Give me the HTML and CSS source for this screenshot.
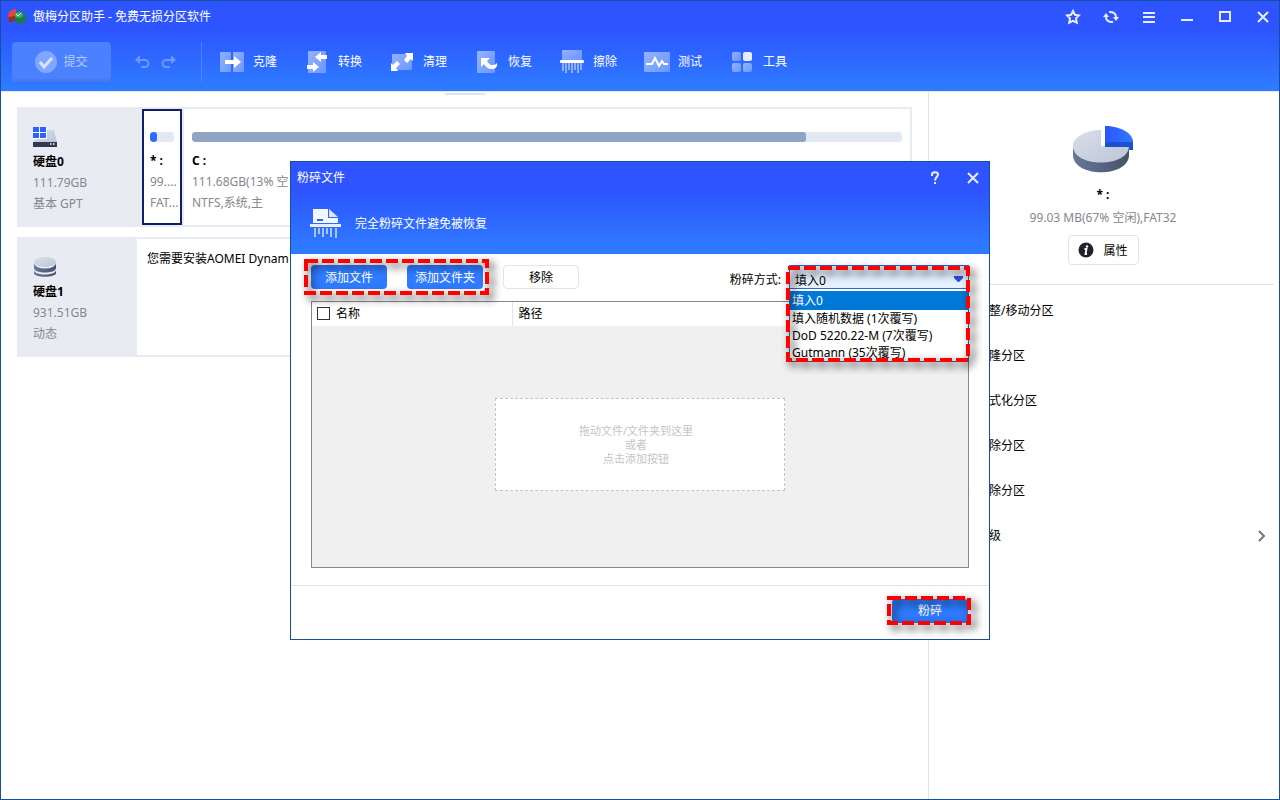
FILE: index.html
```
<!DOCTYPE html>
<html lang="zh-CN">
<head>
  <meta charset="utf-8">
  <title>傲梅分区助手 - 免费无损分区软件</title>
  <link rel="stylesheet" href="styles.css">
</head>
<body>
<svg width="0" height="0" class="defs" aria-hidden="true">
  <defs>
    <linearGradient id="soft" x1="0" y1="0" x2="1" y2="1">
      <stop offset="0" stop-color="#fff" stop-opacity=".5"/>
      <stop offset="1" stop-color="#fff" stop-opacity=".28"/>
    </linearGradient>
    <linearGradient id="steel" x1="0" y1="0" x2="1" y2="0">
      <stop offset="0" stop-color="#68789a"/>
      <stop offset="1" stop-color="#47516b"/>
    </linearGradient>
    <linearGradient id="silver" x1="0" y1="0" x2="1" y2="1">
      <stop offset="0" stop-color="#d8deea"/>
      <stop offset="1" stop-color="#bdc5d6"/>
    </linearGradient>
    <linearGradient id="blue" x1="0" y1="0" x2="1" y2="0">
      <stop offset="0" stop-color="#2d54ff"/>
      <stop offset="1" stop-color="#2e7bff"/>
    </linearGradient>
  </defs>
</svg>

<div class="window">
  <header class="top">
    <div class="titlebar">
      <svg class="logo" width="18" height="16" viewBox="0 0 18 16">
        <path d="M0 7C0 3 4 0 8 0v6L4 8v4L0 11z" fill="#e8443c"/>
        <path d="M0 8l7-1v5l-6 1z" fill="#8e3322"/>
        <path d="M9 0c4 0 8 2 8 6l-4 2-5-3z" fill="#2b63b8"/>
        <path d="M7 8l11-2v5c-1 3-4 4-8 4L7 12z" fill="#1c7a4c"/>
        <ellipse cx="11" cy="6" rx="4" ry="3" fill="#30b266"/>
        <path d="M8 5l2 2 3-3" fill="none" stroke="#d6ffe2" stroke-width="1"/>
      </svg>
      <h1>傲梅分区助手 - 免费无损分区软件</h1>
      <div class="window-buttons">
        <button aria-label="收藏"><svg width="16" height="16" viewBox="0 0 16 16"><path d="M8 2l1.900 3.800 4.100.6-3 3 .8 4.300L8 11.800l-3.800 1.900.8-4.300-3-3 4.100-.6z" class="line"/></svg></button>
        <button aria-label="刷新"><svg width="16" height="16" viewBox="0 0 16 16"><path d="M6 3.200A5.500 5.500 0 0 1 13.200 8M10 12.800A5.500 5.500 0 0 1 2.800 8" class="line"/><path d="M10 8h6l-3 4zM0 8h6L3 4z" fill="#e8eeff"/></svg></button>
        <button aria-label="菜单"><svg width="16" height="16" viewBox="0 0 16 16"><path d="M2 4h12M2 8h12M2 13h12" class="line"/></svg></button>
        <button aria-label="最小化"><svg width="16" height="16" viewBox="0 0 16 16"><path d="M2 11h12" class="line"/></svg></button>
        <button aria-label="最大化"><svg width="16" height="16" viewBox="0 0 16 16"><rect x="3" y="3" width="10" height="9" class="line"/></svg></button>
        <button aria-label="关闭"><svg width="16" height="16" viewBox="0 0 16 16"><path d="M3 3l10 10M13 3L3 13" class="line"/></svg></button>
      </div>
    </div>
    <nav class="toolbar">
      <button class="commit" disabled>
        <svg width="22" height="22" viewBox="0 0 22 22"><circle cx="11" cy="11" r="11" fill="#fff" opacity=".3"/><path d="M5 11l4 5 8-9" fill="none" stroke="#d9e3ff" stroke-width="3"/></svg>
        提交
      </button>
      <button class="history" disabled aria-label="撤销"><svg width="15" height="14" viewBox="0 0 15 14"><path d="M4 5h6a3.500 3.500 0 0 1 0 7H6" fill="none" stroke="#6f97ff" stroke-width="2"/><path d="M0 5l5-5v9z" fill="#6f97ff"/></svg></button>
      <button class="history" disabled aria-label="重做"><svg width="15" height="14" viewBox="0 0 15 14"><path d="M11 5H5a3.500 3.500 0 0 0 0 7h4" fill="none" stroke="#6f97ff" stroke-width="2"/><path d="M15 5l-5-5v9z" fill="#6f97ff"/></svg></button>
      <div class="tools">
        <button class="tool"><svg width="26" height="24" viewBox="0 0 26 24"><rect x="1" y="2" width="11" height="20" rx="1" fill="url(#soft)"/><rect x="14" y="2" width="11" height="20" rx="1" fill="url(#soft)"/><path d="M6 10h9V6l7 6-7 6v-4H6z" fill="#fff"/></svg>克隆</button>
        <button class="tool"><svg width="26" height="24" viewBox="0 0 26 24"><rect x="4" y="1" width="18" height="22" rx="1" fill="url(#soft)"/><path d="M23 5h-6V2l-6 5 6 5V9h6zM3 15h6v-3l6 5-6 5v-3H3z" fill="#fff"/></svg>转换</button>
        <button class="tool"><svg width="26" height="24" viewBox="0 0 26 24"><rect x="3" y="4" width="20" height="16" rx="1" fill="url(#soft)"/><path d="M16 3h8v8l-2-2-4 4-3-3 3-4zM2 13l2 2 4-4 3 3-4 4 2 3H2z" fill="#fff"/></svg>清理</button>
        <button class="tool"><svg width="26" height="24" viewBox="0 0 26 24"><rect x="3" y="1" width="18" height="22" rx="1" fill="url(#soft)"/><path d="M7 8h9l-3 3c2 3 4 5 6 4 2 0 3-1 4-2 1 4-2 6-5 6-4 0-6-2-8-5l-3 3z" fill="#fff"/></svg>恢复</button>
        <button class="tool"><svg width="26" height="24" viewBox="0 0 26 24"><rect x="3" y="0" width="20" height="11" rx="1" fill="url(#soft)"/><path d="M4 13v8M7 13v10M10 13v7M13 13v10M16 13v7M19 13v10M22 13v7" stroke="#fff" stroke-opacity=".45" stroke-width="2"/><rect x="1" y="10" width="24" height="3" rx="1" fill="#fff"/></svg>擦除</button>
        <button class="tool"><svg width="26" height="24" viewBox="0 0 26 24"><rect x="0" y="2" width="26" height="20" rx="1" fill="url(#soft)"/><path d="M2 14h6l3-6 4 8 3-5 2 3h4" fill="none" stroke="#fff" stroke-width="2"/></svg>测试</button>
        <button class="tool"><svg width="26" height="24" viewBox="0 0 26 24"><rect x="3" y="2" width="9" height="9" rx="2" fill="url(#soft)"/><rect x="14" y="2" width="9" height="9" rx="2" fill="#e6edff"/><rect x="3" y="13" width="9" height="9" rx="2" fill="url(#soft)"/><rect x="14" y="13" width="9" height="9" rx="2" fill="url(#soft)"/></svg>工具</button>
      </div>
    </nav>
  </header>

  <main class="content">
    <section class="disks">
      <div class="handle"></div>
      <div class="disk">
        <div class="disk-head disk-head-wide">
          <svg width="24" height="20" viewBox="0 0 24 20"><path d="M14 3h7l3 12H0z" fill="url(#silver)"/><rect y="15" width="24" height="5" fill="#30394f"/><path d="M17 17h1.500M20 17h1.500" stroke="#fff" stroke-width="1.500"/><path d="M0 0h14v12H0z" fill="#fff"/><path d="M0 0h6v5H0zM7 0h6v5H7zM0 6h6v5H0zM7 6h6v5H7z" fill="#2e62ff"/></svg>
          <b>硬盘0</b>
          <span>111.79GB</span>
          <span>基本 GPT</span>
        </div>
        <div class="partition selected">
          <div class="usage"><div class="used" style="width: 28%"></div></div>
          <b>* :</b>
          <span>99....</span>
          <span>FAT...</span>
        </div>
        <div class="partition system">
          <div class="usage"><div class="used" style="width: 86.5%"></div></div>
          <b>C :</b>
          <span>111.68GB(13% 空</span>
          <span>NTFS,系统,主</span>
        </div>
      </div>
      <div class="disk">
        <div class="disk-head">
          <svg width="24" height="20" viewBox="0 0 24 20"><path d="M1 13v3c0 5 22 5 22 0v-3z" fill="url(#steel)"/><path d="M1 11c0 6 22 6 22 0v2c0 6-22 6-22 0z" fill="#e9ecf4"/><path d="M1 6v5c0 5 22 5 22 0V6z" fill="url(#steel)"/><ellipse cx="12" cy="6" rx="11" ry="5.500" fill="#e9ecf4"/><ellipse cx="12" cy="5" rx="11" ry="5" fill="url(#silver)"/></svg>
          <b>硬盘1</b>
          <span>931.51GB</span>
          <span>动态</span>
        </div>
        <p class="notice">您需要安装AOMEI Dynam</p>
      </div>
    </section>

    <aside class="side">
      <div class="summary">
        <svg width="62" height="48" viewBox="0 0 62 48"><path d="M1 21v9c0 23 56 23 56 0v-9z" fill="url(#steel)"/><path d="M29 5v16h28c0 22-56 22-56 0C1 12 14 5 29 5z" fill="url(#silver)"/><path d="M33 17h28v8h-4v-3H33z" fill="#1b52cc"/><path d="M33 1c15 0 28 7 28 16H33z" fill="url(#blue)"/></svg>
        <b>* :</b>
        <span>99.03 MB(67% 空闲),FAT32</span>
        <button class="props"><svg width="16" height="16" viewBox="0 0 16 16"><circle cx="8" cy="8" r="7.500" fill="#202329"/><circle cx="9" cy="4.500" r="1.200" fill="#fff"/><path d="M6.500 7h2l-1 5h1.500" fill="none" stroke="#fff" stroke-width="1.800"/></svg>属性</button>
      </div>
      <ul class="actions">
        <li><a href="#">调整/移动分区</a></li>
        <li><a href="#">克隆分区</a></li>
        <li><a href="#">格式化分区</a></li>
        <li><a href="#">删除分区</a></li>
        <li><a href="#">擦除分区</a></li>
        <li><a href="#">高级<svg width="8" height="12" viewBox="0 0 8 12"><path d="M1 1l5 5-5 5" fill="none" stroke="#777" stroke-width="2"/></svg></a></li>
      </ul>
    </aside>
  </main>
</div>

<div class="overlay">
  <div class="dialog" role="dialog" aria-label="粉碎文件">
    <header class="dialog-top">
      <div class="dialog-title">
        <h2>粉碎文件</h2>
        <div class="window-buttons">
          <button aria-label="帮助"><svg width="16" height="16" viewBox="0 0 16 16"><path d="M5 6V4.500C5 1.500 11 1.500 11 4.500 11 7 8 7 8 10.500M8 12v2" class="line"/></svg></button>
          <button aria-label="关闭"><svg width="16" height="16" viewBox="0 0 16 16"><path d="M3 3l10 10M13 3L3 13" class="line"/></svg></button>
        </div>
      </div>
      <div class="dialog-intro">
        <svg width="32" height="30" viewBox="0 0 32 30"><path d="M3 0h15v9h10v5H3z" fill="#f2f6ff"/><path d="M19 0l9 8h-9z" fill="#dbe6ff"/><path d="M7 10h6v2H7z" fill="#2e62ff"/><rect y="15" width="31" height="3" fill="#e6edff"/><path d="M5 19v9M9 19v6M13 19v9M17 19v6M21 19v9M26 19v10" stroke="#a9c4ff" stroke-width="2"/></svg>
        <p>完全粉碎文件避免被恢复</p>
      </div>
    </header>

    <div class="dialog-body">
      <div class="controls">
        <div class="add-buttons">
          <button class="btn primary">添加文件</button>
          <button class="btn primary">添加文件夹</button>
          <svg class="marker"><rect width="100%" height="100%"/></svg>
        </div>
        <button class="btn">移除</button>
        <label for="method">粉碎方式:</label>
        <div class="method">
          <select id="method">
            <option>填入0</option>
            <option>填入随机数据 (1次覆写)</option>
            <option>DoD 5220.22-M (7次覆写)</option>
            <option>Gutmann (35次覆写)</option>
          </select>
          <svg class="arrow" width="9" height="6" viewBox="0 0 9 6"><path d="M0 0h9v2L5 6H4L0 2z" fill="#2b50e8"/></svg>
          <ul class="method-list" role="listbox" aria-label="粉碎方式">
            <li role="option" aria-selected="true">填入0</li>
            <li role="option">填入随机数据 (1次覆写)</li>
            <li role="option">DoD 5220.22-M (7次覆写)</li>
            <li role="option">Gutmann (35次覆写)</li>
          </ul>
          <svg class="marker"><rect width="100%" height="100%"/></svg>
        </div>
      </div>

      <div class="files">
        <table>
          <thead>
            <tr>
              <th class="col-name"><label><input type="checkbox">名称</label></th>
              <th>路径</th>
            </tr>
          </thead>
        </table>
        <div class="drop-area">
          <p class="dropzone">拖动文件/文件夹到这里<br>或者<br>点击添加按钮</p>
        </div>
      </div>
    </div>

    <footer class="dialog-footer">
      <div class="shred">
        <button class="btn primary">粉碎</button>
        <svg class="marker"><rect width="100%" height="100%"/></svg>
      </div>
    </footer>
  </div>
</div>
</body>
</html>
```
FILE: styles.css
```
* {
  box-sizing: border-box;
}

body {
  margin: 0;
  font-family: "Noto Sans", "Noto Sans CJK SC", sans-serif;
  font-size: 12px;
  line-height: 21px;
  color: #000;
}

h1, h2, p, ul {
  margin: 0;
  padding: 0;
  font-size: 12px;
  font-weight: normal;
}

ul {
  list-style: none;
}

a {
  color: inherit;
  text-decoration: none;
}

button, select {
  font: inherit;
  color: inherit;
  margin: 0;
  padding: 0;
  border: none;
  background: none;
}

svg {
  display: block;
  flex-shrink: 0;
}

.defs {
  position: absolute;
}

.line {
  fill: none;
  stroke: #e8eeff;
  stroke-width: 2;
}

.window {
  display: flex;
  flex-direction: column;
  min-height: 100vh;
  border: 1px solid #1450a0;
  background-color: #fff;
}

.top, .dialog-top {
  background: linear-gradient(#2d54ff 30%, #2e7bff 96%);
  color: #fff;
}

.titlebar {
  display: flex;
  align-items: center;
  height: 31px;
  padding: 0 1px 0 7px;
}

.titlebar h1 {
  margin-left: 7px;
}

.window-buttons {
  display: flex;
  gap: 8px;
  margin-left: auto;
}

.window-buttons button {
  display: flex;
  justify-content: center;
  align-items: center;
  width: 30px;
  height: 30px;
}

.toolbar {
  display: flex;
  align-items: center;
  height: 59px;
  padding: 0 11px;
}

.commit {
  display: flex;
  justify-content: center;
  align-items: center;
  gap: 6px;
  width: 99px;
  height: 40px;
  margin-right: 18px;
  border-radius: 4px;
  background-color: #4b80ff;
  box-shadow: inset 0 -3px #4779f5;
  color: #b4c9ff;
}

.history {
  display: flex;
  justify-content: center;
  width: 26px;
}

.tools {
  display: flex;
  margin-left: 20px;
  padding-left: 17px;
  border-left: 1px solid #4d82ff;
}

.tool {
  display: flex;
  align-items: center;
  gap: 8px;
  width: 85px;
  height: 40px;
}

.content {
  display: flex;
  flex: 1;
  border-top: 1px solid #e3e9f5;
}

.disks {
  flex: 1;
  padding: 1px 16px;
}

.handle {
  width: 40px;
  height: 2px;
  margin: 0 auto 12px;
  background-color: #dde3f0;
}

.disk {
  display: flex;
  min-height: 120px;
  margin-bottom: 10px;
  border: 2px solid #e8ebf2;
}

.disk-head {
  display: flex;
  flex-direction: column;
  width: 118px;
  padding: 18px 14px 0;
  background-color: #e8ebf2;
}

.disk-head-wide {
  width: 123px;
}

.disk-head svg {
  margin-bottom: 4px;
}

.disk-head span, .partition span, .summary span {
  color: #85888e;
}

.partition {
  display: flex;
  flex-direction: column;
  padding: 23px 8px 0;
  white-space: nowrap;
}

.partition.selected {
  width: 40px;
  padding: 21px 6px 0;
  border: 2px solid #101f65;
}

.partition.system {
  flex: 1;
  border-left: 2px solid #e8ebf2;
}

.usage {
  height: 10px;
  margin-bottom: 8px;
  border-radius: 3px;
  background-color: #e2e9f5;
  overflow: hidden;
}

.used {
  height: 10px;
  border-radius: 3px;
  background-color: #90a4c4;
}

.selected .used {
  background-color: #2e6aff;
}

.notice {
  padding: 9px 10px;
}

.side {
  width: 351px;
  padding-right: 5px;
  border-left: 1px solid #dde3f0;
}

.summary {
  display: flex;
  flex-direction: column;
  align-items: center;
  padding: 33px 0 19px 3px;
  border-bottom: 1px solid #dde3f0;
  line-height: 23px;
}

.summary svg {
  margin-bottom: 10px;
}

.props {
  display: flex;
  justify-content: center;
  align-items: center;
  gap: 9px;
  width: 71px;
  height: 30px;
  margin-top: 6px;
  border: 1px solid #dde3f0;
  border-radius: 4px;
}

.props svg {
  margin: 0;
}

.actions {
  padding: 3px 8px 0 48px;
}

.actions a {
  display: flex;
  justify-content: space-between;
  align-items: center;
  height: 45px;
}

.overlay {
  position: fixed;
  inset: 0;
  display: flex;
  justify-content: center;
  align-items: center;
}

.dialog {
  width: 700px;
  max-width: 100%;
  border: 1px solid #1450a0;
  background-color: #fff;
}

.dialog-title {
  display: flex;
  align-items: center;
  height: 32px;
  padding: 0 1px 0 6px;
}

.dialog-intro {
  display: flex;
  align-items: center;
  gap: 13px;
  height: 60px;
  padding: 0 19px;
}

.dialog-body {
  padding: 11px 20px 17px;
}

.controls {
  display: flex;
  align-items: center;
  margin-bottom: 11px;
}

.add-buttons {
  display: flex;
  gap: 20px;
  margin-right: 20px;
  position: relative;
}

.btn {
  width: 76px;
  height: 24px;
  border: 1px solid #dde3f0;
  border-radius: 4px;
}

.btn.primary {
  border: none;
  background-color: #2e7bff;
  color: #fff;
}

.controls > label {
  margin-left: auto;
  margin-right: 8px;
  padding-top: 4px;
}

.method {
  position: relative;
  width: 180px;
}

.method select {
  appearance: none;
  display: block;
  width: 100%;
  height: 24px;
  padding: 4px 5px 0;
  border: 1px solid #2e62e0;
  border-radius: 0;
  background-color: #e5f1ff;
}

.arrow {
  position: absolute;
  top: 11px;
  right: 6px;
}

.method-list {
  position: absolute;
  top: 100%;
  left: 0;
  right: 0;
  z-index: 1;
  margin-top: 2px;
  padding: 0 2px;
  border: solid #0078d7;
  border-width: 0 1px 1px;
  background-color: #fff;
  line-height: 17px;
  white-space: nowrap;
}

.method-list li[aria-selected] {
  margin: 0 -2px;
  padding: 1px 2px;
  background-color: #0078d7;
  color: #fff;
}

/* red dashed frames */
.marker {
  position: absolute;
  z-index: 2;
  top: -4px;
  left: -5px;
  width: calc(100% + 9px);
  height: calc(100% + 8px);
  overflow: visible;
  pointer-events: none;
  filter: drop-shadow(4px 4px 4px rgba(0, 0, 0, 0.8));
}

.marker rect {
  fill: none;
  stroke: #f00;
  stroke-width: 4;
  stroke-dasharray: 12 4;
}

.method .marker {
  top: 3px;
  left: -1px;
  width: 100%;
  height: 92px;
}

.shred .marker {
  top: -1px;
  left: -3px;
  width: calc(100% + 4px);
  height: calc(100% + 1px);
}

.files {
  display: flex;
  flex-direction: column;
  min-height: 267px;
  border: 1px solid #828790;
  background-color: #f0f0f0;
}

.files table {
  width: 100%;
  border-collapse: collapse;
  table-layout: fixed;
  background-color: #fff;
}

.files th {
  height: 24px;
  padding: 0 6px;
  font-weight: normal;
  text-align: left;
}

.files .col-name {
  width: 200px;
  padding: 0 5px;
  border-right: 1px solid #e5e5e5;
}

.files th label {
  display: flex;
  align-items: center;
  gap: 6px;
}

.files input {
  appearance: none;
  width: 13px;
  height: 13px;
  margin: 0;
  border: 1px solid #333;
  background-color: #fff;
}

.drop-area {
  display: flex;
  justify-content: center;
  align-items: center;
  flex: 1;
  padding-bottom: 4px;
}

.dropzone {
  width: 290px;
  padding: 25px 8px 24px 0;
  border: 1px dashed #c4c4c4;
  background-color: #fff;
  color: #c4c4c4;
  font-size: 11px;
  line-height: 14px;
  text-align: center;
}

.dialog-footer {
  display: flex;
  justify-content: flex-end;
  padding: 13px 21px 16px;
  border-top: 1px solid #dde3f0;
}

.shred {
  display: flex;
  position: relative;
}
```
